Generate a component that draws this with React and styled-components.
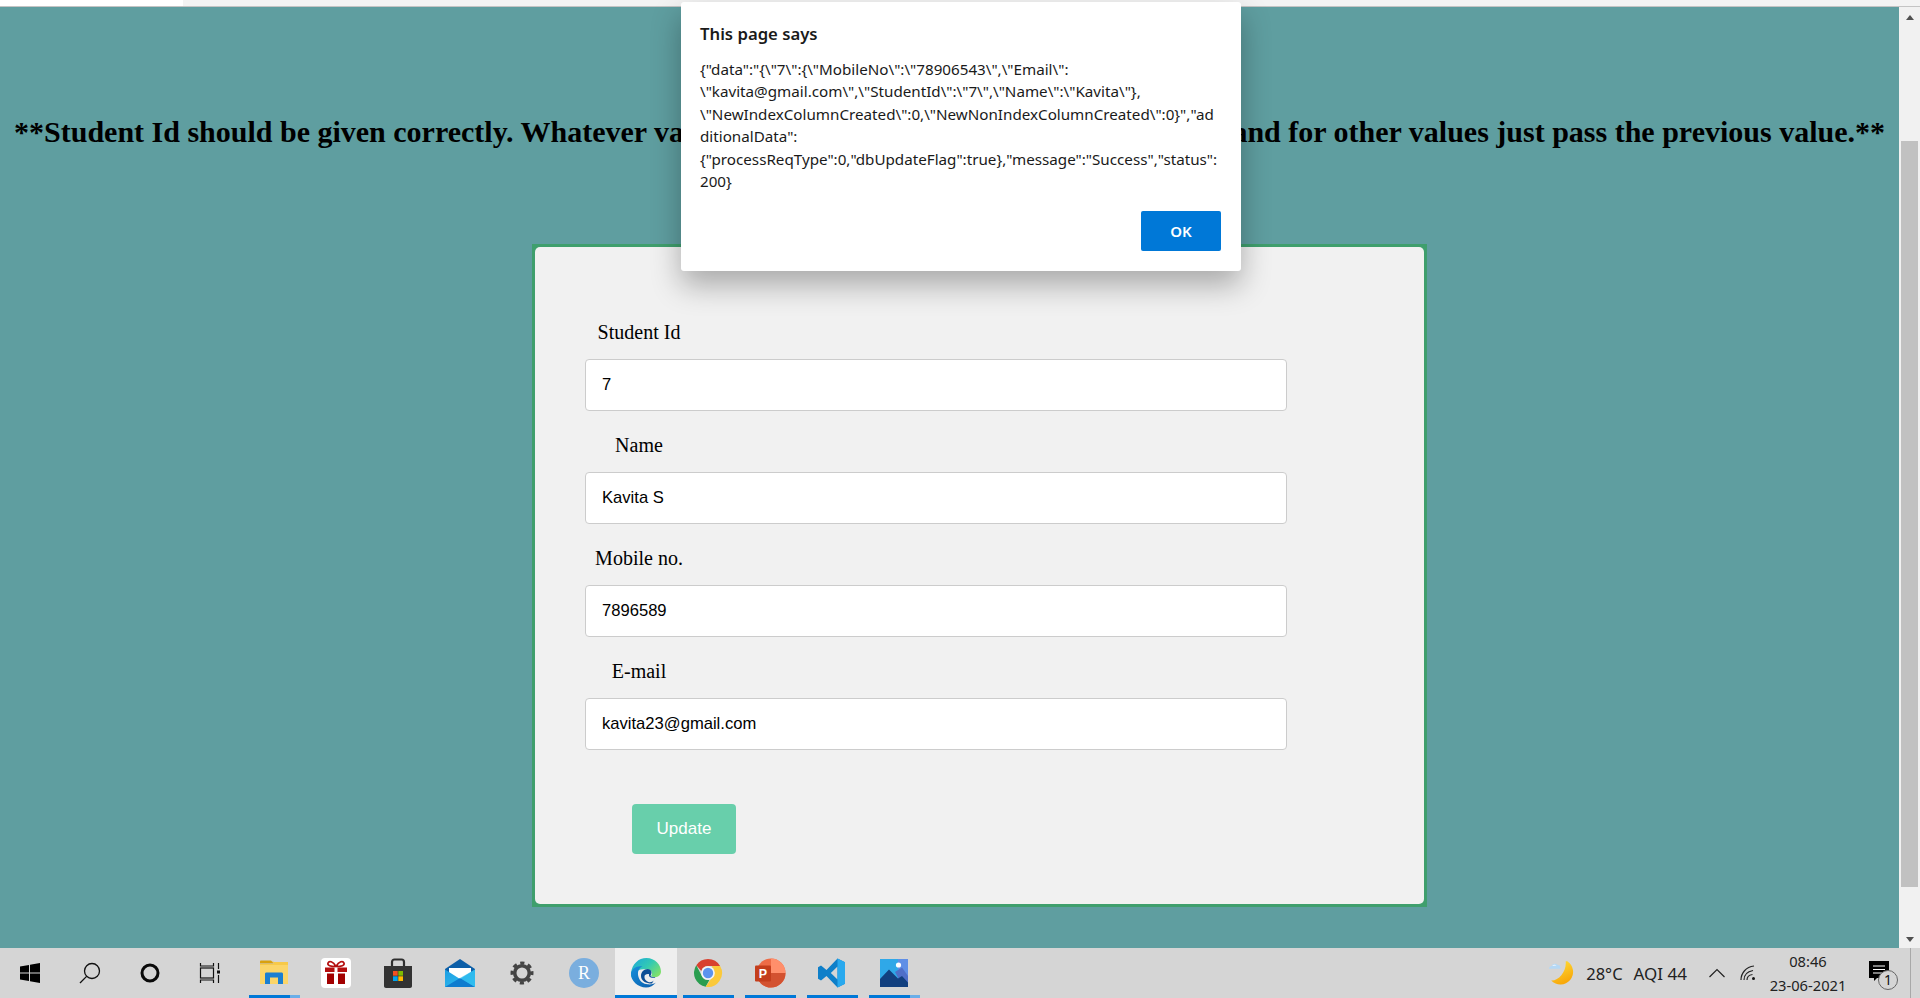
import styled, { createGlobalStyle } from "styled-components";

const GlobalStyle = createGlobalStyle`
  html, body {
    margin: 0;
    padding: 0;
    overflow: hidden;
    background: #5f9ea0;
  }
  * { box-sizing: border-box; }
`;

const FIELDS = [
  { label: "Student Id", value: "7" },
  { label: "Name", value: "Kavita S" },
  { label: "Mobile no.", value: "7896589" },
  { label: "E-mail", value: "kavita23@gmail.com" },
];

const ALERT_LINES = [
  '{"data":"{\\"7\\":{\\"MobileNo\\":\\"78906543\\",\\"Email\\":',
  '\\"kavita@gmail.com\\",\\"StudentId\\":\\"7\\",\\"Name\\":\\"Kavita\\"},',
  '\\"NewIndexColumnCreated\\":0,\\"NewNonIndexColumnCreated\\":0}","ad',
  'ditionalData":',
  '{"processReqType":0,"dbUpdateFlag":true},"message":"Success","status":',
  "200}",
];

const WindowsIcon = () => (
  <svg width="32" height="32" viewBox="0 0 32 32">
    <path d="M6 9.500 15 8v7.500H6zM16 7.800 26 6v9.500H16zM6 16.500h9V24l-9-1.500zM16 16.500h10V26l-10-1.800z" fill="#000" />
  </svg>
);

const SearchIcon = () => (
  <svg width="32" height="32" viewBox="0 0 32 32" fill="none" stroke="#111" strokeWidth="1.300">
    <circle cx="18" cy="14" r="7.500" />
    <path d="M12.600 19.400 6 26" />
  </svg>
);

const CortanaIcon = () => (
  <svg width="32" height="32" viewBox="0 0 32 32" fill="none" stroke="#0a0a0a" strokeWidth="3">
    <circle cx="16" cy="16" r="8" />
  </svg>
);

const TaskViewIcon = () => (
  <svg width="32" height="32" viewBox="0 0 32 32" fill="none" stroke="#111" strokeWidth="1.200">
    <path d="M6.500 6v3h13V6M6.500 26v-3h13v3" />
    <rect x="6.500" y="11" width="13" height="10" />
    <path d="M24.500 6v6M24.500 18v8" />
    <rect x="23" y="13.500" width="3" height="3" fill="#111" stroke="none" />
  </svg>
);

const ExplorerIcon = () => (
  <svg width="32" height="32" viewBox="0 0 32 32">
    <path d="M2 4.500C2 4 2.500 3.500 3 3.500h10l3 3H2z" fill="#d9a10e" />
    <path d="M2 7h28v20H2z" fill="#fbd568" />
    <path d="M2 7h14l-2-3 2 1h14v3H2z" fill="#f7c948" />
    <path d="M7 27V17c0-1 .6-1.500 1.500-1.500h15c.9 0 1.500.5 1.500 1.500v10h-5v-6.500h-8V27z" fill="#1b7fd1" />
  </svg>
);

const GiftIcon = () => (
  <svg width="32" height="32" viewBox="0 0 32 32">
    <rect x="1" y="1" width="30" height="30" rx="4" fill="#fff" />
    <path d="M16 9.500C13 4 9 3.500 8 6c-.8 2.500 2.500 3.500 8 3.500zM16 9.500C19 4 23 3.500 24 6c.8 2.500-2.500 3.500-8 3.500z" fill="none" stroke="#b40f0f" strokeWidth="1.700" />
    <rect x="5" y="10.500" width="22" height="4.500" fill="#b40f0f" />
    <path d="M7 16.500h7V27H7zM18 16.500h7V27h-7z" fill="#a20000" />
    <path d="M14.500 10.500h3V15h-3z" fill="#fff" />
  </svg>
);

const StoreIcon = () => (
  <svg width="32" height="32" viewBox="0 0 32 32">
    <path d="M10 9V5c0-1.500 1-2.500 2.500-2.500h7C21 2.500 22 3.500 22 5v4" fill="none" stroke="#2e2e2e" strokeWidth="2.200" />
    <path d="M2 9h28v20c0 1-.8 2-2 2H4c-1.200 0-2-1-2-2z" fill="#333" />
    <rect x="11" y="14" width="4.700" height="4.700" fill="#f25022" />
    <rect x="16.300" y="14" width="4.700" height="4.700" fill="#7fba00" />
    <rect x="11" y="19.300" width="4.700" height="4.700" fill="#00a4ef" />
    <rect x="16.300" y="19.300" width="4.700" height="4.700" fill="#ffb900" />
  </svg>
);

const MailIcon = () => (
  <svg width="32" height="32" viewBox="0 0 32 32">
    <defs>
      <linearGradient id="mailBody" x1="0" y1="0" x2="1" y2="1">
        <stop offset="0" stopColor="#1b9de2" />
        <stop offset="1" stopColor="#35c1f1" />
      </linearGradient>
    </defs>
    <path d="M16 2 31 12v4H1v-4z" fill="#0c5fa8" />
    <path d="M5 11h22v6l-11 7-11-7z" fill="#fff" />
    <path d="M1 12.500 16 22l15-9.500V30H1z" fill="url(#mailBody)" />
    <path d="M1 30 16 21l15 9z" fill="#0f7ccf" />
    <path d="M16 21 31 30V12.500z" fill="#30bdf0" opacity="0.7" />
  </svg>
);

const GearIcon = () => (
  <svg width="32" height="32" viewBox="0 0 32 32" fill="none" stroke="#444">
    <circle cx="16" cy="16" r="7.300" strokeWidth="3.600" />
    <circle cx="16" cy="16" r="10" strokeWidth="3" strokeDasharray="4.200 3.654" strokeDashoffset="2.100" />
  </svg>
);

const RIcon = () => (
  <svg width="32" height="32" viewBox="0 0 32 32">
    <circle cx="16" cy="16" r="15" fill="#7aaede" />
    <text x="16" y="22" textAnchor="middle" fontFamily="Liberation Serif" fontSize="18" fill="#fff">R</text>
  </svg>
);

const EdgeIcon = () => (
  <svg width="32" height="32" viewBox="0 0 32 32">
    <defs>
      <linearGradient id="edgeTop" x1="0" y1="0" x2="1" y2="0.700">
        <stop offset="0" stopColor="#1aa6dc" />
        <stop offset="0.550" stopColor="#32c9b4" />
        <stop offset="1" stopColor="#7fe06a" />
      </linearGradient>
      <linearGradient id="edgeLow" x1="0" y1="0" x2="1" y2="1">
        <stop offset="0" stopColor="#1690dc" />
        <stop offset="1" stopColor="#0b5cab" />
      </linearGradient>
    </defs>
    <path d="M1 16C2 7 8.500 1 16.500 1 25 1 31 7.500 31 14.500c0 3.500-2.500 5.500-6 5.500-2 0-3.500-.5-4-1 2-1.800 1.500-7-5-7C8.500 12 3 15 1 21z" fill="url(#edgeTop)" />
    <path d="M1 16c1-4.500 6-8 11.500-6.500-3.500 1.200-5.500 5-4 10.500 1.300 4.500 5 7 9 7.300 4 .4 7-.7 8.500-1.800-2.500 3-6 5-10 5C8 30.500 .5 24 1 16z" fill="url(#edgeLow)" />
    <path d="M11 19c0-4 3-7 6.500-7 2.500 0 4 1.500 4 3.500 0 1.500-.8 2.500-1 3.500 1 1 3 1.300 5 1-1.500 2-2.500 5.500-3.500 6.500-6 0-11-2.500-11-7.500z" fill="#0e4f96" />
    <path d="M19 17c-.3 1.700.3 3 2 3.500 1.500.5 3.500.3 5.500-.3-1.500 2.800-3.500 5-6.500 5-2.500 0-6-2.500-5.500-6 .3-1.500 1.500-2.500 4.500-2.200z" fill="#eee" />
  </svg>
);

const ChromeIcon = () => (
  <svg width="32" height="32" viewBox="0 0 32 32">
    <path d="M16 2a14 14 0 0 1 12.100 7H16a7 7 0 0 0-6.700 5L4.300 8.300A14 14 0 0 1 16 2z" fill="#d8402f" />
    <path d="M4.300 8.300 9.600 18.500a7 7 0 0 0 7.800 4.400L13.700 29.800A14 14 0 0 1 4.300 8.300z" fill="#2a9d4f" />
    <path d="M28.100 9A14 14 0 0 1 13.700 29.800l5.900-8.800a7 7 0 0 0 .7-10.500l-.3-1.500z" fill="#fbc93a" />
    <circle cx="16" cy="16" r="6.800" fill="#f4f4f4" />
    <circle cx="16" cy="16" r="5.200" fill="#5b93ee" />
  </svg>
);

const PowerPointIcon = () => (
  <svg width="32" height="32" viewBox="0 0 32 32">
    <circle cx="17" cy="16" r="14.500" fill="#ed6c47" />
    <path d="M17 1.500A14.500 14.500 0 0 1 31.500 16H17z" fill="#ff8f6b" />
    <path d="M2.500 16a14.500 14.500 0 0 0 29 0z" fill="#d35230" />
    <rect x="1" y="8.500" width="16" height="16" rx="1" fill="#c43e1c" />
    <text x="9" y="21" textAnchor="middle" fontFamily="Liberation Sans" fontWeight="700" fontSize="12.500" fill="#fff">P</text>
  </svg>
);

const VsCodeIcon = () => (
  <svg width="32" height="32" viewBox="0 0 32 32">
    <path fillRule="evenodd" d="M21.500 1.500 29 5.200v21.600l-7.500 3.700L10.500 19l-5.500 4.500-3-1.800v-11.400l3-1.800 5.500 4.500zM21.500 9.500 14.800 16l6.700 6.500z" fill="#0e7fc9" />
    <path d="M21.500 1.500 29 5.200v21.600l-7.500 3.700z" fill="#29a9ee" />
  </svg>
);

const PhotosIcon = () => (
  <svg width="32" height="32" viewBox="0 0 32 32">
    <rect x="2" y="2" width="28" height="28" fill="#2fa8e8" />
    <path d="M20 2h10v28H20z" fill="#5f8fe6" />
    <circle cx="20.500" cy="8" r="2.600" fill="#fff" />
    <path d="M17 15 24 10.500 30 19v6l-6 3z" fill="#4f6fc8" />
    <path d="M2 22 11 12.500l9 9 4-2.500 6 6.500V30H2z" fill="#12407f" />
  </svg>
);

const MoonIcon = () => (
  <svg width="28" height="28" viewBox="0 0 26 26">
    <defs>
      <linearGradient id="moonFill" x1="0" y1="0" x2="0.400" y2="1">
        <stop offset="0" stopColor="#ffe23c" />
        <stop offset="1" stopColor="#f8a80a" />
      </linearGradient>
    </defs>
    <path d="M17 2A11.800 11.800 0 1 1 2 20C9 20.500 16.500 11.500 15.500 2z" fill="url(#moonFill)" />
    <path d="M0 9c0-1.800 1.300-2.600 2.500-2.600C3.200 4.200 6.600 3.800 8 5.600c1.800-.2 3 1.200 2.500 3.400z" fill="#b4d8f5" />
    <path d="M3 6.500c.7-1.300 3-1.600 4-.4z" fill="#eef6fd" />
  </svg>
);

const ChevronIcon = () => (
  <svg width="16" height="10" viewBox="0 0 16 10" fill="none" stroke="#222" strokeWidth="1.200">
    <path d="M.5 9 8 1.500 15.500 9" />
  </svg>
);

const WifiIcon = () => (
  <svg width="16" height="16" viewBox="0 0 16 16" fill="none" stroke="#222" strokeWidth="1.200">
    <path d="M1 15C1 8 6 2 14 1M4 15c0-5 3.500-8.500 9-9.500M7 15c0-3 2-5 5.500-5.500" />
    <circle cx="13.500" cy="13.500" r="1.500" fill="#111" stroke="none" />
  </svg>
);

const BubbleIcon = () => (
  <svg width="20" height="20" viewBox="0 0 20 20">
    <path d="M0 0h20v17H8l-3 3v-3H0z" fill="#000" />
    <path d="M4 5h12M4 8.500h12M4 12h12" stroke="#fff" strokeWidth="1" />
  </svg>
);

const TASK_ICONS = [
  { icon: <ExplorerIcon />, running: true, stacked: true },
  { icon: <GiftIcon /> },
  { icon: <StoreIcon /> },
  { icon: <MailIcon /> },
  { icon: <GearIcon /> },
  { icon: <RIcon /> },
  { icon: <EdgeIcon />, running: true, active: true },
  { icon: <ChromeIcon />, running: true },
  { icon: <PowerPointIcon />, running: true },
  { icon: <VsCodeIcon />, running: true },
  { icon: <PhotosIcon />, running: true, stacked: true },
];

const App = () => {
  return (
    <Screen>
      <GlobalStyle />
      <TopStrip />
      <Middle>
        <Content>
          <Notice>
            **Student Id should be given correctly. Whatever value you want to update, give the new value and for other values just pass the previous value.**
          </Notice>
          <CardFrame>
            <Card>
              {FIELDS.map(field => (
                <Field key={field.label}>
                  <Label>{field.label}</Label>
                  <Input readOnly value={field.value} />
                </Field>
              ))}
              <UpdateButton>Update</UpdateButton>
            </Card>
          </CardFrame>
        </Content>
        <Scrollbar>
          <ArrowUp />
          <Thumb />
          <ArrowDown />
        </Scrollbar>
      </Middle>
      <Taskbar>
        <SystemButtons>
          <Slot><WindowsIcon /></Slot>
          <Slot><SearchIcon /></Slot>
          <Slot><CortanaIcon /></Slot>
          <Slot><TaskViewIcon /></Slot>
        </SystemButtons>
        {TASK_ICONS.map((task, i) => (
          <AppSlot key={i} $active={task.active}>
            {task.icon}
            {task.running && <RunningBar $active={task.active} $stacked={task.stacked} />}
          </AppSlot>
        ))}
        <Tray>
          <MoonIcon />
          <Weather>28°C</Weather>
          <Aqi>AQI 44</Aqi>
          <ChevronSlot><ChevronIcon /></ChevronSlot>
          <WifiSlot><WifiIcon /></WifiSlot>
          <Clock>
            <span>08:46</span>
            <span>23-06-2021</span>
          </Clock>
          <Notification>
            <BubbleIcon />
            <CountBadge>1</CountBadge>
          </Notification>
          <ShowDesktop />
        </Tray>
      </Taskbar>
      <Alert>
        <AlertTitle>This page says</AlertTitle>
        <AlertBody>
          {ALERT_LINES.map(line => (
            <div key={line}>{line}</div>
          ))}
        </AlertBody>
        <AlertFooter>
          <OkButton>OK</OkButton>
        </AlertFooter>
      </Alert>
    </Screen>
  );
};

const Screen = styled.div`
  position: relative;
  display: flex;
  flex-direction: column;
  width: 1920px;
  height: 998px;
  overflow: hidden;
`;

const TopStrip = styled.div`
  height: 7px;
  flex: none;
  background: linear-gradient(90deg, #fff 0, #fff 183px, #f3f3f3 183px);
  border-bottom: 1px solid #c4c4c4;
`;

const Middle = styled.div`
  display: flex;
  flex: 1;
  min-height: 0;
`;

const Content = styled.div`
  flex: 1;
  min-width: 0;
  background: #5f9ea0;
  padding-top: 107px;
`;

const Notice = styled.div`
  font-family: "Liberation Serif", serif;
  font-weight: 700;
  font-size: 30px;
  line-height: 36px;
  color: #000;
  text-align: center;
  white-space: nowrap;
`;

const CardFrame = styled.div`
  width: 895px;
  height: 663px;
  margin: 94px 0 0 532px;
  padding: 3px;
  background: #3f9f6d;
`;

const Card = styled.div`
  height: 100%;
  padding: 75px 0 0 50px;
  background: #f1f1f1;
  border-radius: 5px;
`;

const Field = styled.div`
  width: 702px;
  margin-bottom: 24px;
`;

const Label = styled.div`
  width: 108px;
  height: 21px;
  margin-bottom: 16px;
  font-family: "Liberation Serif", serif;
  font-size: 20px;
  line-height: 20px;
  color: #000;
  text-align: center;
  white-space: nowrap;
`;

const Input = styled.input`
  display: block;
  width: 100%;
  height: 52px;
  padding: 0 16px;
  background: #fff;
  border: 1px solid #ccc;
  border-radius: 4px;
  outline: none;
  font-family: "Liberation Sans", sans-serif;
  font-size: 16.6px;
  color: #000;
`;

const UpdateButton = styled.button`
  display: block;
  width: 104px;
  height: 50px;
  margin: 54px 0 0 47px;
  padding: 0;
  background: #68cfab;
  border: none;
  border-radius: 4px;
  font-family: "Liberation Sans", sans-serif;
  font-size: 17px;
  color: #fff;
`;

const Scrollbar = styled.div`
  display: flex;
  flex-direction: column;
  align-items: center;
  justify-content: space-between;
  width: 21px;
  flex: none;
  padding: 8px 0 6px;
  background: #f1f1f1;
`;

const ArrowUp = styled.div`
  width: 0;
  height: 0;
  margin-right: -1px;
  border-left: 4.5px solid transparent;
  border-right: 4.5px solid transparent;
  border-bottom: 5px solid #505050;
`;

const ArrowDown = styled(ArrowUp)`
  border-bottom: none;
  border-top: 5px solid #505050;
`;

const Thumb = styled.div`
  width: 17px;
  height: 746px;
  margin-top: 71px;
  background: #c1c1c1;
`;

const Taskbar = styled.div`
  display: flex;
  height: 50px;
  flex: none;
  background: #d5d5d5;
`;

const SystemButtons = styled.div`
  display: flex;
  flex: none;
  padding-right: 3px;
`;

const Slot = styled.div`
  display: flex;
  align-items: center;
  justify-content: center;
  width: 60px;
  height: 50px;
  flex: none;
`;

const AppSlot = styled(Slot)`
  position: relative;
  width: 62px;
  background: ${p => (p.$active ? "#eeeeee" : "transparent")};
`;

const RunningBar = styled.div`
  position: absolute;
  left: ${p => (p.$active ? "0" : "6px")};
  right: ${p => (p.$active ? "0" : "5px")};
  bottom: 0;
  height: 3px;
  background: ${p =>
    p.$stacked
      ? "linear-gradient(90deg, #0078d7 0, #0078d7 80%, #6aaee8 80%)"
      : "#0078d7"};
`;

const Tray = styled.div`
  display: flex;
  align-items: center;
  margin-left: auto;
  font-family: "Noto Sans", sans-serif;
  color: #222;
`;

const Weather = styled.span`
  margin-left: 9px;
  font-size: 16.5px;
`;

const Aqi = styled.span`
  margin-left: 11px;
  font-size: 17px;
`;

const ChevronSlot = styled.div`
  display: flex;
  margin-left: 22px;
`;

const WifiSlot = styled.div`
  display: flex;
  margin-left: 15px;
`;

const Clock = styled.div`
  display: flex;
  flex-direction: column;
  align-items: center;
  width: 76px;
  margin-left: 14px;
  font-size: 14.7px;
  line-height: 24px;
  white-space: nowrap;
`;

const Notification = styled.div`
  position: relative;
  display: flex;
  margin: -4px 0 0 23px;
`;

const CountBadge = styled.span`
  position: absolute;
  left: 9px;
  top: 9px;
  display: flex;
  align-items: center;
  justify-content: center;
  width: 20px;
  height: 20px;
  border: 1px solid #666;
  border-radius: 50%;
  background: #d5d5d5;
  font-size: 14px;
  line-height: 1;
  color: #111;
`;

const ShowDesktop = styled.div`
  width: 10px;
  height: 50px;
  margin-left: 21px;
  border-left: 1px solid #a8a8a8;
`;

const Alert = styled.div`
  position: absolute;
  left: 681px;
  top: 2px;
  width: 560px;
  height: 269px;
  padding: 22px 20px 20px 19px;
  background: #fff;
  border-radius: 3px;
  box-shadow: 0 14px 30px rgba(0, 0, 0, 0.3);
  font-family: "Noto Sans", sans-serif;
  color: #1a1a1a;
`;

const AlertTitle = styled.div`
  font-size: 16.7px;
  font-weight: 600;
  line-height: 20px;
`;

const AlertBody = styled.div`
  margin-top: 14px;
  font-size: 15.2px;
  line-height: 22.4px;
  white-space: nowrap;
`;

const AlertFooter = styled.div`
  display: flex;
  justify-content: flex-end;
  margin-top: 19px;
`;

const OkButton = styled.button`
  width: 80px;
  height: 40px;
  padding: 0;
  background: #0078d7;
  border: none;
  border-radius: 2px;
  font-family: "Noto Sans", sans-serif;
  font-size: 15px;
  font-weight: 600;
  color: #fff;
`;

export default App;
